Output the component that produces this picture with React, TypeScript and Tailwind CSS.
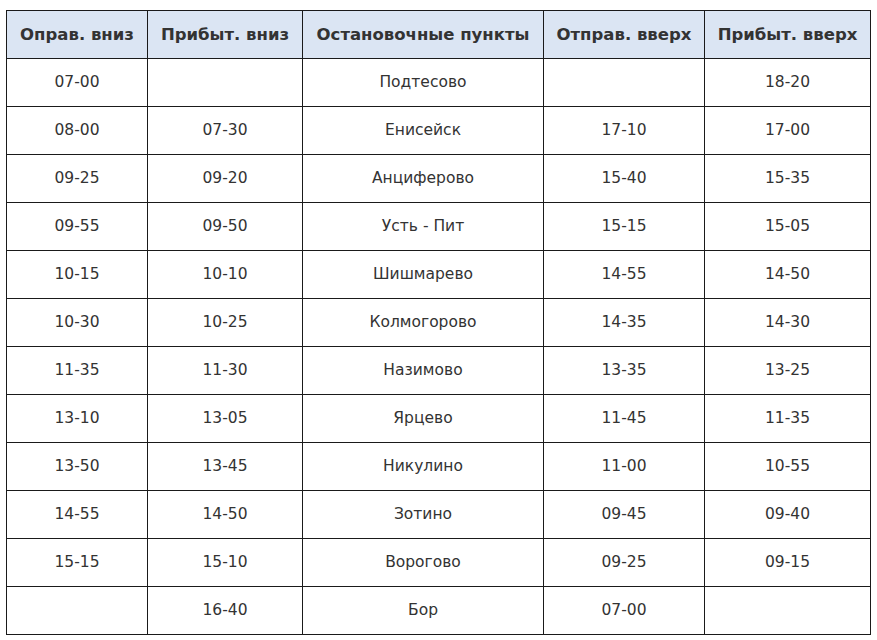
const rows: [string, string, string, string, string][] = [
  ["07-00", "", "Подтесово", "", "18-20"],
  ["08-00", "07-30", "Енисейск", "17-10", "17-00"],
  ["09-25", "09-20", "Анциферово", "15-40", "15-35"],
  ["09-55", "09-50", "Усть - Пит", "15-15", "15-05"],
  ["10-15", "10-10", "Шишмарево", "14-55", "14-50"],
  ["10-30", "10-25", "Колмогорово", "14-35", "14-30"],
  ["11-35", "11-30", "Назимово", "13-35", "13-25"],
  ["13-10", "13-05", "Ярцево", "11-45", "11-35"],
  ["13-50", "13-45", "Никулино", "11-00", "10-55"],
  ["14-55", "14-50", "Зотино", "09-45", "09-40"],
  ["15-15", "15-10", "Ворогово", "09-25", "09-15"],
  ["", "16-40", "Бор", "07-00", ""],
];

const headers = [
  "Оправ. вниз",
  "Прибыт. вниз",
  "Остановочные пункты",
  "Отправ. вверх",
  "Прибыт. вверх",
];

const widths = ["w-[141px]", "w-[155px]", "w-[241px]", "w-[161px]", "w-[166px]"];

export default function App() {
  return (
    <div className="bg-white min-h-[640px] pt-[10px] pl-[6px] font-['DejaVu_Sans',sans-serif] text-[#333]">
      <table className="border-collapse table-fixed w-[864px]">
        <thead>
          <tr className="bg-[#dbe5f3]">
            {headers.map((h, i) => (
              <th
                key={h}
                className={`${widths[i]} h-[48px] border border-[#1a1a1a] text-center text-[16.5px] font-bold p-0 pt-[1px]`}
              >
                {h}
              </th>
            ))}
          </tr>
        </thead>
        <tbody>
          {rows.map((r, ri) => (
            <tr key={ri}>
              {r.map((c, ci) => (
                <td
                  key={ci}
                  className="h-[48px] border border-[#1a1a1a] text-center text-[15.5px] p-0 pt-[1px]"
                >
                  {c}
                </td>
              ))}
            </tr>
          ))}
        </tbody>
      </table>
    </div>
  );
}
